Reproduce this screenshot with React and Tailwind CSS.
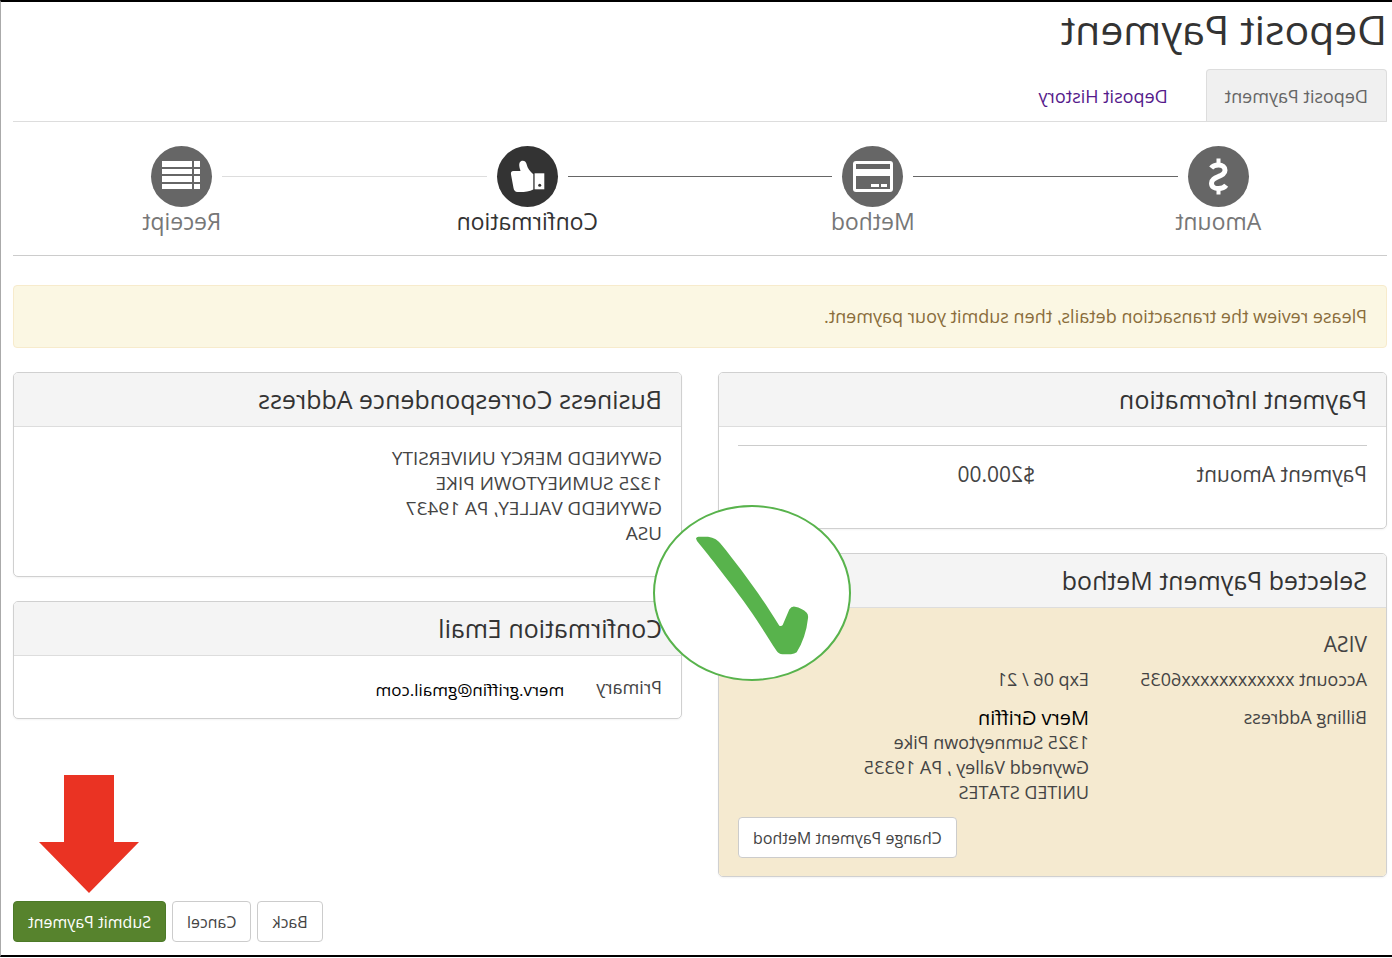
function DollarIcon() {
  return (
    <svg viewBox="0 0 61 61" className="size-full" fill="none" stroke="#fff" aria-hidden="true">
      <path
        strokeWidth="5"
        d="M37.800 22C36.300 20 33.500 19 30.500 19C26.500 19 24 21.200 24 24.200C24 27.800 27 29 30.500 30.500C34.500 32.200 37.500 33.500 37.500 37.200C37.500 40.800 34.500 42.600 30.500 42.600C27.300 42.600 24.500 41.400 22.800 39.200"
      />
      <path strokeWidth="4" d="M30.500 12.500V19M30.500 43V48.500" />
    </svg>
  );
}

function CardIcon() {
  return (
    <svg viewBox="0 0 61 61" className="size-full" aria-hidden="true">
      <rect x="10" y="15" width="40" height="31" rx="3" fill="#fff" />
      <path d="M13 18h34v5H13zM13 30h34v13H13z" fill="#666" />
      <path d="M16 38h6v3h-6zM24 38h8v3h-8z" fill="#fff" />
    </svg>
  );
}

function ThumbIcon() {
  return (
    <svg viewBox="0 0 61 61" className="size-full" aria-hidden="true">
      <path
        fill="#fff"
        d="M24.700 28.200C28 25.500 30.500 22.500 31.300 18.500C31.800 16 33 14.700 35.300 14.700C38 14.700 39 17 38.700 20C38.500 22 37.800 23.500 37.500 25H44.500C46.800 25 47.300 26.500 47 28.500L44.500 42C44 44.500 43 45.800 40.500 46C35 46.400 29 45.500 24.700 43.400Z"
      />
      <rect x="13.700" y="27.300" width="9.700" height="16" fill="#fff" />
      <circle cx="18.300" cy="39.300" r="1.500" fill="#333" />
    </svg>
  );
}

function ListIcon() {
  return (
    <svg viewBox="0 0 61 61" className="size-full" aria-hidden="true">
      <path
        fill="#fff"
        d="M12 15h6v6h-6zM20 15h30v6H20zM12 23h6v5h-6zM20 23h30v5H20zM12 30h6v6h-6zM20 30h30v6H20zM12 38h6v5h-6zM20 38h30v5H20z"
      />
    </svg>
  );
}

const steps = [
  { label: "Amount", icon: <DollarIcon />, before: "invisible", after: "bg-[#666]" },
  { label: "Method", icon: <CardIcon />, before: "bg-[#666]", after: "bg-[#666]" },
  { label: "Confirmation", icon: <ThumbIcon />, before: "bg-[#666]", after: "bg-[#ddd]", current: true },
  { label: "Receipt", icon: <ListIcon />, before: "bg-[#ddd]", after: "invisible" },
];

function Step({ step }) {
  return (
    <li className="flex-1" aria-current={step.current ? "step" : undefined}>
      <div className="flex items-center gap-[10px]">
        <span className={`h-px flex-1 ${step.before}`} />
        <span
          className={`flex size-[61px] items-center justify-center rounded-full ${step.current ? "bg-[#333]" : "bg-[#666]"}`}
        >
          {step.icon}
        </span>
        <span className={`h-px flex-1 ${step.after}`} />
      </div>
      <p className={`text-center text-[23px] leading-7 ${step.current ? "text-[#333]" : "text-[#777]"}`}>
        {step.label}
      </p>
    </li>
  );
}

function Panel({ title, bodyClass, children }) {
  return (
    <section className="overflow-hidden rounded-[5px] border border-[#d0d0d0] shadow-xs">
      <h2 className="border-b border-[#ddd] bg-[#f4f4f4] px-[19px] py-[9px] text-[25px] leading-[35px] text-[#333]">
        {title}
      </h2>
      <div className={`px-[19px] ${bodyClass}`}>{children}</div>
    </section>
  );
}

const plainButton = "h-[41px] rounded-[4px] border border-[#ccc] bg-white px-[14px] text-base text-[#444]";

export default function App() {
  return (
    <div className="-scale-x-100 border-y-2 border-r border-y-black border-r-[#aaa] bg-white pr-3 pb-[13px] pl-[5px] font-['Open_Sans','Noto_Sans',sans-serif] text-[18px] leading-[25px] text-[#444]">
      <h1 className="pt-[2px] text-[41px] leading-[50px] text-[#333]">Deposit Payment</h1>

      <nav className="mt-[15px] flex gap-[2px] border-b border-[#ddd]">
        <a
          href="#payment"
          aria-current="page"
          className="rounded-t-[4px] border border-b-0 border-[#ddd] bg-[#f0f0f0] px-[18px] pt-[14px] pb-3 text-[#666]"
        >
          Deposit Payment
        </a>
        <a href="#history" className="px-9 pt-[15px] pb-3 text-[#551a8b]">
          Deposit History
        </a>
      </nav>

      <ol className="-mx-1 mt-6 flex">
        {steps.map((step) => (
          <Step key={step.label} step={step} />
        ))}
      </ol>

      <p className="mt-5 border-t border-[#ccc] pt-[29px]">
        <span className="block rounded-[4px] border border-[#f7ebcc] bg-[#fbf7e3] px-[19px] py-[18px] text-[#8a6d3b]">
          Please review the transaction details, then submit your payment.
        </span>
      </p>

      <main className="relative mt-6 grid grid-cols-2 items-start gap-9">
        <div className="flex flex-col gap-6">
          <Panel title="Payment Information" bodyClass="pt-[18px] pb-[41px]">
            <dl className="flex border-t border-[#ccc] pt-4 text-[21px]">
              <dt className="w-[332px]">Payment Amount</dt>
              <dd>$200.00</dd>
            </dl>
          </Panel>

          <Panel title="Selected Payment Method" bodyClass="bg-[#f5ead0] pt-6 pb-[18px]">
            <p className="text-[21px]">VISA</p>
            <div className="mt-[10px] flex">
              <p className="w-[278px]">Account xxxxxxxxxxxx6035</p>
              <p>Exp 06 / 21</p>
            </div>
            <div className="mt-[13px] flex">
              <p className="w-[278px]">Billing Address</p>
              <address className="not-italic">
                <strong className="block text-[20px] font-medium text-black">Merv Griffin</strong>
                1325 Sumneytown Pike
                <br />
                Gwynedd Valley , PA 19335
                <br />
                UNITED STATES
              </address>
            </div>
            <div className="mt-3 flex justify-end">
              <button type="button" className={plainButton}>
                Change Payment Method
              </button>
            </div>
          </Panel>
        </div>

        <div className="flex flex-col gap-6">
          <Panel title="Business Correspondence Address" bodyClass="pt-[19px] pb-[30px]">
            <address className="text-[19px] not-italic">
              GWYNEDD MERCY UNIVERSITY
              <br />
              1325 SUMNEYTOWN PIKE
              <br />
              GWYNEDD VALLEY, PA 19437
              <br />
              USA
            </address>
          </Panel>

          <Panel title="Confirmation Email" bodyClass="pt-[19px] pb-[14px]">
            <dl className="flex gap-8">
              <dt>Primary</dt>
              <dd className="text-[17px] leading-[29px] font-medium text-black">merv.griffin@gmail.com</dd>
            </dl>
          </Panel>
        </div>

        <svg
          viewBox="0 0 198 176"
          className="absolute top-[133px] left-[39%] h-44 w-[198px]"
          role="img"
          aria-label="Approved"
        >
          <ellipse cx="99" cy="88" rx="98" ry="87" fill="#fff" stroke="#58b34c" strokeWidth="2" />
          <path
            fill="#58b34c"
            d="M155 33.500Q154.500 31.700 152.500 31.700H143C137 32.500 133 35 129.300 40C114 59 93 86 71.700 120.700Q69.500 121.500 68.300 120L61.700 104.500Q59.500 101 56 101.700Q49 103 44.300 107.700Q42.500 109.500 43 113.300Q44 123 47 131.700Q50 140.500 54.300 147.300Q56.500 149 60 149.200H68.500Q72.500 149 74.300 146C81 136 87 126 94.300 115C105 98.500 119 80.500 131 65C138.500 55 148 43.500 154 36Z"
          />
        </svg>
      </main>

      <div className="mt-6 flex justify-end gap-[6px]">
        <button type="button" className={plainButton}>
          Back
        </button>
        <button type="button" className={plainButton}>
          Cancel
        </button>
        <div className="relative">
          <svg
            viewBox="0 0 100 118"
            className="absolute bottom-full left-1/2 mb-2 h-[118px] w-[100px] -translate-x-1/2"
            aria-hidden="true"
          >
            <path d="M25 0H75V67H100L50 118L0 67H25Z" fill="#ea3323" />
          </svg>
          <button
            type="button"
            className="h-[41px] rounded-[4px] border border-[#4c7a28] bg-[#57832d] px-[14px] text-base text-white"
          >
            Submit Payment
          </button>
        </div>
      </div>
    </div>
  );
}
